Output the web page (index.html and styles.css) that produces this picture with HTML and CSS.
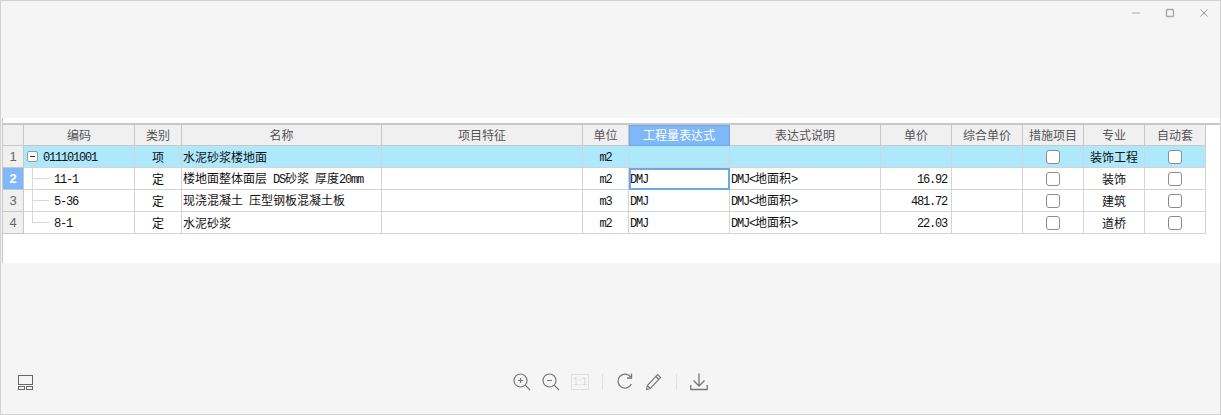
FILE: index.html
```html
<!DOCTYPE html>
<html lang="zh-CN">
<head>
  <meta charset="UTF-8">
  <title>工程量表达式</title>
  <link rel="stylesheet" href="styles.css">
</head>
<body>
  <div class="window">
    <div class="titlebar">
      <svg class="win-btn" viewBox="0 0 10 10"><path d="M1 5h8" stroke="#b5b5b5" stroke-width="1.2"/></svg>
      <svg class="win-btn" viewBox="0 0 10 10"><rect x="1.5" y="1.5" width="7" height="7" rx="1" fill="none" stroke="#a8a8a8" stroke-width="1.4"/></svg>
      <svg class="win-btn" viewBox="0 0 10 10"><path d="M1.5 1.5l7 7M8.5 1.5l-7 7" stroke="#999" stroke-width="1"/></svg>
    </div>

    <div class="sheet">
      <div class="sheet-body">
        <table class="grid">
          <colgroup>
            <col class="c-no"><col class="c-code"><col class="c-type"><col class="c-name"><col class="c-feat">
            <col class="c-unit"><col class="c-expr"><col class="c-desc"><col class="c-num"><col class="c-num">
            <col class="c-flag"><col class="c-flag"><col class="c-flag">
          </colgroup>
          <thead>
            <tr>
              <th></th><th>编码</th><th>类别</th><th>名称</th><th>项目特征</th><th>单位</th>
              <th class="th-active">工程量表达式</th><th>表达式说明</th><th>单价</th><th>综合单价</th>
              <th>措施项目</th><th>专业</th><th>自动套</th>
            </tr>
          </thead>
          <tbody>
            <tr class="row-main">
              <td class="no">1</td>
              <td class="code"><span class="expander"></span><span class="lat">011101001</span></td>
              <td class="mid">项</td>
              <td>水泥砂浆楼地面</td>
              <td></td>
              <td class="mid"><span class="lat">m2</span></td>
              <td></td><td></td><td></td><td></td>
              <td class="mid"><input class="check" type="checkbox"></td>
              <td class="mid">装饰工程</td>
              <td class="mid"><input class="check" type="checkbox"></td>
            </tr>
            <tr>
              <td class="no no-active">2</td>
              <td class="code child"><span class="lat">11-1</span></td>
              <td class="mid">定</td>
              <td>楼地面整体面层<span class="lat"> DS</span>砂浆<span class="lat"> </span>厚度<span class="lat">20mm</span></td>
              <td></td>
              <td class="mid"><span class="lat">m2</span></td>
              <td class="cell-active"><span class="lat">DMJ</span></td>
              <td><span class="lat">DMJ&lt;</span>地面积<span class="lat">&gt;</span></td>
              <td class="price"><span class="lat">16.92</span></td>
              <td></td>
              <td class="mid"><input class="check" type="checkbox"></td>
              <td class="mid">装饰</td>
              <td class="mid"><input class="check" type="checkbox"></td>
            </tr>
            <tr>
              <td class="no">3</td>
              <td class="code child"><span class="lat">5-36</span></td>
              <td class="mid">定</td>
              <td>现浇混凝土<span class="lat"> </span>压型钢板混凝土板</td>
              <td></td>
              <td class="mid"><span class="lat">m3</span></td>
              <td><span class="lat">DMJ</span></td>
              <td><span class="lat">DMJ&lt;</span>地面积<span class="lat">&gt;</span></td>
              <td class="price"><span class="lat">481.72</span></td>
              <td></td>
              <td class="mid"><input class="check" type="checkbox"></td>
              <td class="mid">建筑</td>
              <td class="mid"><input class="check" type="checkbox"></td>
            </tr>
            <tr>
              <td class="no">4</td>
              <td class="code child last"><span class="lat">8-1</span></td>
              <td class="mid">定</td>
              <td>水泥砂浆</td>
              <td></td>
              <td class="mid"><span class="lat">m2</span></td>
              <td><span class="lat">DMJ</span></td>
              <td><span class="lat">DMJ&lt;</span>地面积<span class="lat">&gt;</span></td>
              <td class="price"><span class="lat">22.03</span></td>
              <td></td>
              <td class="mid"><input class="check" type="checkbox"></td>
              <td class="mid">道桥</td>
              <td class="mid"><input class="check" type="checkbox"></td>
            </tr>
          </tbody>
        </table>
      </div>
    </div>

    <div class="toolbar">
      <div class="tool-left">
        <svg class="layout-icon" viewBox="0 0 15 15" fill="none" stroke="#666" stroke-width="1">
          <rect x="0.5" y="0.5" width="14" height="9"/>
          <rect x="0.5" y="11.5" width="6" height="3"/>
          <rect x="8.5" y="11.5" width="6" height="3"/>
        </svg>
      </div>
      <div class="tools">
        <svg class="tool" viewBox="0 0 18 18" fill="none" stroke="#777" stroke-width="1.2">
          <circle cx="7.5" cy="7.5" r="6.5"/><path d="M12.2 12.2l4.8 4.8M5 7.5h5M7.5 5v5"/>
        </svg>
        <svg class="tool" viewBox="0 0 18 18" fill="none" stroke="#777" stroke-width="1.2">
          <circle cx="7.5" cy="7.5" r="6.5"/><path d="M12.2 12.2l4.8 4.8M5 7.5h5"/>
        </svg>
        <span class="ratio">1:1</span>
        <span class="divider"></span>
        <svg class="tool" viewBox="0 0 18 18" fill="none" stroke="#777" stroke-width="1.3">
          <path d="M15 4.5A7 7 0 1 0 15.4 11"/><path d="M15.5 0.5v4.5h-4.5"/>
        </svg>
        <svg class="tool" viewBox="0 0 18 18" fill="none" stroke="#777" stroke-width="1.1">
          <path d="M1.5 16.5l.8-4L12.6 1.5l3 3L5.3 15.500zM2.300 12.500l3 3M10.800 3.500l3 3"/>
        </svg>
        <span class="divider"></span>
        <svg class="tool" viewBox="0 0 18 18" fill="none" stroke="#777" stroke-width="1.3">
          <path d="M9 0.5v12M3.5 7.5L9 13l5.500-5.500M0.800 12v4.500h16.400V12"/>
        </svg>
      </div>
    </div>
  </div>
</body>
</html>
```
FILE: styles.css
```css
*{
  margin: 0;
  padding: 0;
  box-sizing: border-box;
}

body{
  background: #f5f5f5;
  font: 12px "Noto Sans CJK SC", sans-serif;
  color: #111;
}

.window{
  display: flex;
  flex-direction: column;
  width: 1221px;
  height: 415px;
  background: #f5f5f5;
  border: 1px solid #d2d2d2;
}

.titlebar{
  display: flex;
  justify-content: flex-end;
  gap: 24px;
  height: 117px;
  padding: 7px 11px 0 0;
}
.win-btn{
  width: 10px;
  height: 10px;
}

.sheet{
  height: 145px;
  margin-left: 1px;
  padding-top: 5px;
  background: #fff;
  border-left: 1px solid #c8c8c8;
}
.sheet-body{
  border-top: 2px solid #c8c8c8;
}

.grid{
  width: 1203px;
  table-layout: fixed;
  border-collapse: separate;
  border-spacing: 0;
}
.c-no{ width: 21px; }
.c-code{ width: 111px; }
.c-type{ width: 47px; }
.c-name{ width: 200px; }
.c-feat{ width: 201px; }
.c-unit{ width: 46px; }
.c-expr{ width: 101px; }
.c-desc{ width: 151px; }
.c-num{ width: 71px; }
.c-flag{ width: 61px; }

.grid th,
.grid td{
  height: 22px;
  padding: 0 0 0 1px;
  overflow: hidden;
  white-space: nowrap;
  line-height: 18px;
  border-right: 1px solid #d4d4d4;
  border-bottom: 1px solid #d4d4d4;
}
.grid th{
  height: 21px;
  padding: 0;
  font-weight: normal;
  color: #555;
  text-align: center;
  background: #f0f0f0;
  border-color: #c8c8c8;
}
.grid .th-active{
  color: #fff;
  background: #7fb8f8;
  outline: 1px solid #6ea8ec;
  outline-offset: -1px;
}

.grid td.no{
  padding: 0;
  font-family: "Liberation Sans", sans-serif;
  font-size: 13px;
  color: #666;
  text-align: center;
  background: #f0f0f0;
  border-color: #c8c8c8;
}
.grid td.no-active{
  font-weight: bold;
  color: #fff;
  background: #7fb8f8;
}

.row-main td{
  background: #ade8fb;
}
.grid td.mid{
  padding: 0;
  text-align: center;
}
.grid td.price{
  padding: 0 4px 0 0;
  text-align: right;
}
.grid .cell-active{
  outline: 2px solid #6ea8ec;
  outline-offset: -2px;
}

/* 等宽西文，一个字符占半个汉字 */
.lat{
  font-family: "Liberation Mono", monospace;
  letter-spacing: -1.2px;
  white-space: pre;
}

.grid td.code{
  position: relative;
  padding-left: 3px;
}
.grid td.child{
  padding-left: 30px;
}
.expander{
  display: inline-block;
  position: relative;
  width: 11px;
  height: 11px;
  margin-right: 5px;
  vertical-align: -1px;
  background: #fff;
  border: 1px solid #999;
  border-radius: 2px;
}
.expander::before{
  content: '';
  position: absolute;
  top: 4px;
  left: 2px;
  width: 5px;
  height: 1px;
  background: #333;
}
.expander::after{
  content: '';
  position: absolute;
  top: 10px;
  left: 4px;
  width: 1px;
  height: 6px;
  background: #d8d8d8;
}
.child::before{
  content: '';
  position: absolute;
  top: 0;
  bottom: 0;
  left: 8px;
  width: 1px;
  background: #d8d8d8;
}
.child.last::before{
  bottom: 11px;
}
.child::after{
  content: '';
  position: absolute;
  top: 10px;
  left: 8px;
  width: 17px;
  height: 1px;
  background: #d8d8d8;
}

.check{
  display: block;
  width: 14px;
  height: 14px;
  margin: 1px auto 0;
  appearance: none;
  background: #fff;
  border: 1px solid #8c8c8c;
  border-radius: 3px;
}

.toolbar{
  display: grid;
  grid-template-columns: 1fr auto 1fr;
  align-items: center;
  margin-top: 110px;
}
.tool-left{
  padding-left: 17px;
}
.layout-icon{
  display: block;
  width: 15px;
  height: 15px;
}
.tools{
  display: flex;
  align-items: center;
  gap: 11px;
}
.tool{
  width: 18px;
  height: 18px;
}
.ratio{
  width: 18px;
  height: 16px;
  font: 10px/14px "Liberation Sans", sans-serif;
  color: #d8d8d8;
  text-align: center;
  border: 1px solid #dedede;
}
.divider{
  width: 1px;
  height: 16px;
  margin: 0 2px;
  background: #e2e2e2;
}
```
